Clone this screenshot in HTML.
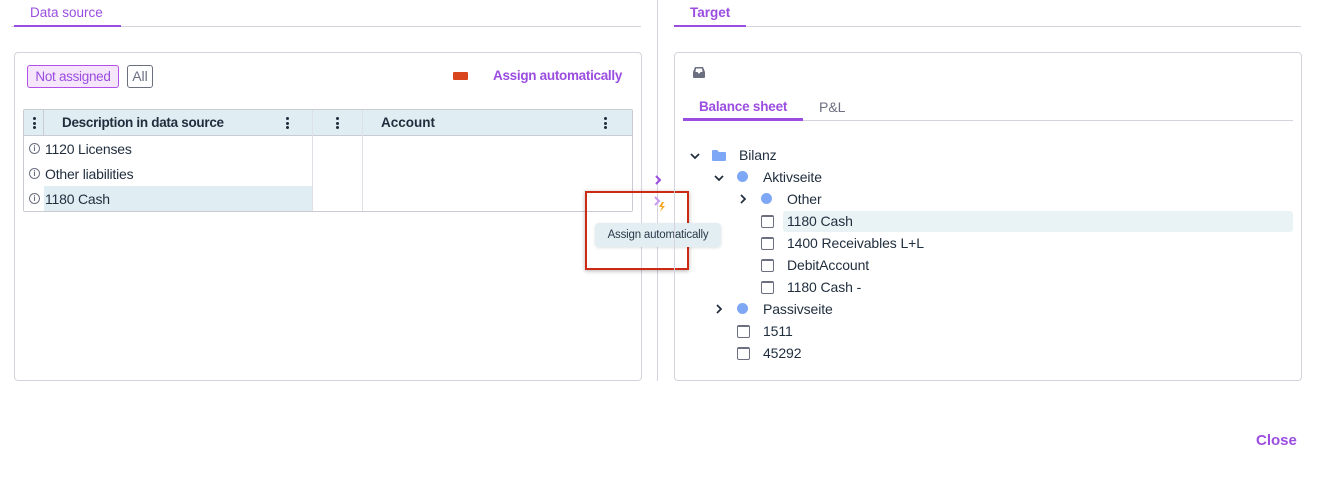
<!DOCTYPE html>
<html><head><meta charset="utf-8"><style>
*{box-sizing:border-box;margin:0;padding:0}
body{width:1333px;height:490px;background:#fff;font-family:"Liberation Sans",sans-serif;color:#1f2d3d;position:relative;overflow:hidden;font-size:14px}
.a{position:absolute}
.p{color:#9b4de0}
.line{background:#d6d3de}
.box{border:1px solid #d6d3de;border-radius:4px}
.dots{position:absolute;width:3px;top:7px}
.dots i{display:block;width:3px;height:3px;background:#1f2d3d;border-radius:50%;margin-bottom:1.5px}
.info{position:absolute;left:5px;width:11px;height:11px;border:1px solid #6b6f80;border-radius:50%;font-size:8px;line-height:9px;text-align:center;color:#6b6f80;font-weight:bold}
.cb{position:absolute;width:13px;height:13px;border:1.5px solid #6b6f80;border-top-width:2.5px;border-radius:2px}
.dot{position:absolute;width:11px;height:11px;border-radius:50%;background:#7ea7f5}
.t{position:absolute;font-size:14px;color:#1f2d3d;letter-spacing:-0.1px}
.c{position:absolute}
</style></head><body>
<div class="a p" style="left:30px;top:5px;font-size:13.5px">Data source</div>
<div class="a line" style="left:11px;top:26px;width:630px;height:1px"></div>
<div class="a" style="left:14px;top:25px;width:107px;height:2px;background:#9b4de0"></div>
<div class="a line" style="left:657px;top:0;width:1px;height:381px"></div>
<div class="a box" style="left:14px;top:52px;width:628px;height:329px"></div>
<div class="a" style="left:27px;top:65px;width:92px;height:23px;border:1px solid #b44fe8;background:#f5e6fc;border-radius:3px;color:#9b4de0;font-size:13.5px;line-height:21px;text-align:center;letter-spacing:-0.3px">Not assigned</div>
<div class="a" style="left:127px;top:65px;width:26px;height:23px;border:1px solid #6b6f80;border-radius:3px;color:#6b6f80;line-height:21px;text-align:center">All</div>
<div class="a" style="left:453px;top:72px;width:15px;height:8px;background:#d9461e;border-radius:1px"></div>
<div class="a p" style="left:493px;top:68px;font-weight:bold;font-size:13.5px;letter-spacing:-0.3px">Assign automatically</div>
<div class="a" style="left:23px;top:109px;width:610px;height:103px;border:1px solid #c9ccd3;border-radius:2px;overflow:hidden">
 <div class="a" style="left:0;top:0;width:610px;height:26px;background:#e0eef3;border-bottom:1px solid #c9ccd3"></div>
 <div class="dots" style="left:9px"><i></i><i></i><i></i></div>
 <div class="a" style="left:19px;top:0;width:1px;height:26px;background:#c9ccd3"></div>
 <div class="a" style="left:38px;top:5px;font-weight:bold;font-size:13.5px;letter-spacing:-0.3px">Description in data source</div>
 <div class="dots" style="left:262px"><i></i><i></i><i></i></div>
 <div class="a" style="left:288px;top:0;width:1px;height:103px;background:#dde0e4"></div>
 <div class="dots" style="left:312px"><i></i><i></i><i></i></div>
 <div class="a" style="left:338px;top:0;width:1px;height:103px;background:#dde0e4"></div>
 <div class="a" style="left:357px;top:5px;font-weight:bold;font-size:13.5px">Account</div>
 <div class="dots" style="left:580px"><i></i><i></i><i></i></div>
 <div class="a" style="left:20px;top:76px;width:268px;height:25px;background:#e0eef3"></div>
 <div class="info" style="top:33px">i</div><div class="a" style="left:21px;top:31px;letter-spacing:-0.2px">1120 Licenses</div>
 <div class="info" style="top:58px">i</div><div class="a" style="left:21px;top:56px;letter-spacing:-0.2px">Other liabilities</div>
 <div class="info" style="top:83px">i</div><div class="a" style="left:21px;top:81px;letter-spacing:-0.2px">1180 Cash</div>
</div>
<svg class="a" style="left:653px;top:174px" width="10" height="12"><path d="M3 2l4 4-4 4" stroke="#9b4de0" stroke-width="2" fill="none"/></svg>
<svg class="a" style="left:653px;top:196px" width="14" height="18"><path d="M2 1l4 4-4 4" stroke="#c79af0" stroke-width="2" fill="none"/><path d="M9 6l-3 5h3l-2 5 5-6h-3l2-4z" fill="#f5a623"/></svg>
<div class="a" style="left:585px;top:191px;width:104px;height:79px;border:2px solid #cc2a14;box-shadow:0 1px 4px rgba(0,0,0,.3)"></div>
<div class="a" style="left:595px;top:223px;width:126px;height:24px;background:#e3eef3;border-radius:4px;box-shadow:0 1px 3px rgba(0,0,0,.12);font-size:11.5px;line-height:24px;text-align:center;color:#2b3a4a;letter-spacing:-0.2px">Assign automatically</div>
<div class="a p" style="left:690px;top:5px;font-weight:bold;font-size:13.5px">Target</div>
<div class="a line" style="left:674px;top:26px;width:627px;height:1px"></div>
<div class="a" style="left:674px;top:25px;width:72px;height:2px;background:#9b4de0"></div>
<div class="a box" style="left:674px;top:52px;width:628px;height:329px"></div>
<svg class="a" style="left:692px;top:66px" width="14" height="13"><path d="M3 1h8l2 5v5a1 1 0 0 1-1 1H2a1 1 0 0 1-1-1V6z" fill="#6b6f80"/><path d="M3.5 6h2l1 1.5h1l1-1.5h2L10 2.5H4z" fill="#fff"/></svg>
<div class="a p" style="left:699px;top:99px;font-weight:bold;font-size:13.5px;letter-spacing:-0.2px">Balance sheet</div>
<div class="a" style="left:819px;top:99px;color:#6b6f80;font-size:14px">P&amp;L</div>
<div class="a line" style="left:683px;top:120px;width:610px;height:1px"></div>
<div class="a" style="left:683px;top:118px;width:120px;height:3px;background:#9b4de0"></div>
<div class="a" style="left:783px;top:211px;width:510px;height:21px;background:#e9f3f5;border-radius:3px"></div>
<svg class="c" style="left:689px;top:151px" width="12" height="10"><path d="M2 3l4 4 4-4" stroke="#1f2d3d" stroke-width="1.7" fill="none"/></svg>
<svg class="a" style="left:711px;top:149px" width="16" height="13"><path d="M1 2a1 1 0 0 1 1-1h4l2 2h6a1 1 0 0 1 1 1v7a1 1 0 0 1-1 1H2a1 1 0 0 1-1-1z" fill="#7ea7f5"/></svg>
<div class="t" style="left:739px;top:147px">Bilanz</div>
<svg class="c" style="left:713px;top:173px" width="12" height="10"><path d="M2 3l4 4 4-4" stroke="#1f2d3d" stroke-width="1.7" fill="none"/></svg>
<div class="dot" style="left:737px;top:171px"></div>
<div class="t" style="left:763px;top:169px">Aktivseite</div>
<svg class="c" style="left:738px;top:193px" width="10" height="12"><path d="M3 2l4 4-4 4" stroke="#1f2d3d" stroke-width="1.7" fill="none"/></svg>
<div class="dot" style="left:761px;top:193px"></div>
<div class="t" style="left:787px;top:191px">Other</div>
<div class="cb" style="left:761px;top:215px"></div><div class="t" style="left:787px;top:213px">1180 Cash</div>
<div class="cb" style="left:761px;top:237px"></div><div class="t" style="left:787px;top:235px">1400 Receivables L+L</div>
<div class="cb" style="left:761px;top:259px"></div><div class="t" style="left:787px;top:257px">DebitAccount</div>
<div class="cb" style="left:761px;top:281px"></div><div class="t" style="left:787px;top:279px">1180 Cash -</div>
<svg class="c" style="left:714px;top:303px" width="10" height="12"><path d="M3 2l4 4-4 4" stroke="#1f2d3d" stroke-width="1.7" fill="none"/></svg>
<div class="dot" style="left:737px;top:303px"></div>
<div class="t" style="left:763px;top:301px">Passivseite</div>
<div class="cb" style="left:737px;top:325px"></div><div class="t" style="left:763px;top:323px">1511</div>
<div class="cb" style="left:737px;top:347px"></div><div class="t" style="left:763px;top:345px">45292</div>
<div class="a p" style="left:1256px;top:432px;font-weight:bold;font-size:15px">Close</div>
</body></html>
